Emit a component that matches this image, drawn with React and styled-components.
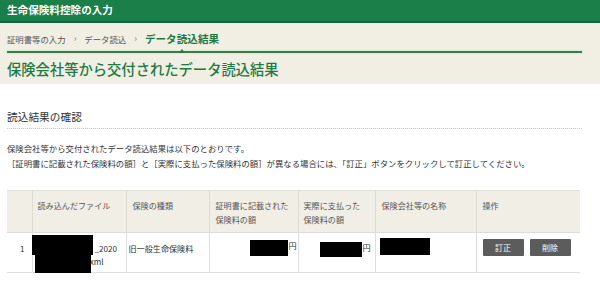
import React from "react";
import styled, { createGlobalStyle } from "styled-components";

const GlobalStyle = createGlobalStyle`
  html, body { margin: 0; padding: 0; background: #ffffff; }
  body {
    font-family: "Noto Sans CJK JP", "Noto Sans", "Liberation Sans", sans-serif;
    color: #333333;
    width: 600px;
    overflow: hidden;
  }
  * { box-sizing: border-box; }
`;

const Page = styled.div`
  width: 600px;
  display: flex;
  flex-direction: column;
`;

const TopBar = styled.header`
  height: 23px;
  background: #1b7f4a;
  border-bottom: 2px solid #15633a;
  display: flex;
  align-items: center;
  padding: 0 0 2px 7px;
  color: #ffffff;
  font-weight: 700;
  font-size: 10.6px;
  line-height: 12px;
`;

const Hero = styled.section`
  background: #f1eee4;
  border-top: 1px solid #e4efe4;
  padding: 0 18px 0 7px;
  display: flex;
  flex-direction: column;
`;

const Breadcrumb = styled.nav`
  height: 27px;
  padding-top: 2px;
  display: flex;
  align-items: center;
  gap: 7px;
  font-size: 8.4px;
  line-height: 12px;
  color: #555555;
`;

const Crumb = styled.span`
  position: relative;
  font-size: ${(p) => (p.$current ? "10.6px" : "8.4px")};
  font-weight: ${(p) => (p.$current ? 700 : 400)};
  color: ${(p) => (p.$current ? "#1f7a45" : "#555555")};
  ${(p) =>
    p.$current &&
    `
    &::after {
      content: "";
      position: absolute;
      left: 50%;
      bottom: -8px;
      margin-left: -3px;
      border-left: 3px solid transparent;
      border-right: 3px solid transparent;
      border-bottom: 4px solid #2f7445;
    }
  `}
`;

const Sep = styled.span`
  font-size: 9px;
  color: #777777;
  padding: 0 1px;
`;

const Rule = styled.div`
  height: 2px;
  background: #3d7a4e;
  box-shadow: 0 0 0 1px #d9ead6;
`;

const Title = styled.h1`
  margin: 0;
  height: 31px;
  display: flex;
  align-items: center;
  font-size: 14.3px;
  font-weight: 500;
  color: #1f7a45;
  line-height: 18px;
`;

const Content = styled.main`
  padding: 26px 18px 0 7px;
  display: flex;
  flex-direction: column;
`;

const SectionHeading = styled.h2`
  margin: 0;
  font-size: 10.7px;
  font-weight: 400;
  line-height: 14px;
  color: #333333;
  padding-bottom: 4px;
  border-bottom: 1px dotted #d6c894;
`;

const Lead = styled.div`
  margin-top: 12px;
  font-size: 8.4px;
  line-height: 15px;
  color: #333333;
`;

const Line = styled.p`
  margin: 0;
  white-space: nowrap;
`;

const Table = styled.table`
  margin-top: 19px;
  width: 573px;
  border-collapse: collapse;
  table-layout: fixed;
  font-size: 8.1px;
`;

const Col = styled.col`
  width: ${(p) => p.$w}px;
`;

const Th = styled.th`
  background: #f1eee5;
  border-top: 1px solid #e2e0d8;
  border-left: ${(p) => (p.$first ? "none" : "1px solid #dedbd2")};
  border-bottom: 1px solid #dcdcdc;
  height: 41px;
  padding: 8px 6px 5px ${(p) => (p.$pl ?? 6)}px;
  text-align: left;
  vertical-align: top;
  font-weight: 400;
  color: #555555;
  line-height: 14px;
`;

const Td = styled.td`
  border-left: ${(p) => (p.$first ? "none" : "1px solid #dedede")};
  border-bottom: 1px solid #dedede;
  height: 40px;
  padding: ${(p) => p.$pt ?? 9}px ${(p) => p.$pr ?? 4}px 0 ${(p) => p.$pl ?? 4}px;
  vertical-align: top;
  text-align: ${(p) => p.$align || "left"};
  line-height: 13px;
  color: #333333;
`;

const FileName = styled.div`
  position: relative;
  display: flex;
  flex-direction: column;
`;

const Hidden = styled.span`
  display: inline-block;
  width: ${(p) => p.$w}px;
`;

const Redaction = styled.span`
  position: absolute;
  left: ${(p) => p.$x}px;
  top: ${(p) => p.$y}px;
  width: ${(p) => p.$w}px;
  height: ${(p) => p.$h}px;
  background: #000000;
`;

const Amount = styled.div`
  display: flex;
  justify-content: flex-end;
  align-items: flex-start;
  margin-top: ${(p) => p.$mt}px;
`;

const Block = styled.span`
  display: block;
  width: ${(p) => p.$w}px;
  height: ${(p) => p.$h}px;
  background: #000000;
`;

const Yen = styled.span`
  line-height: 12px;
  font-size: 8.1px;
  color: #333333;
`;

const Actions = styled.div`
  display: flex;
  gap: 6px;
`;

const Button = styled.button`
  width: 41px;
  height: 17px;
  border: none;
  border-radius: 1px;
  background: #5c5c5c;
  color: #ffffff;
  font-family: inherit;
  font-size: 8px;
  line-height: 17px;
  padding: 0;
  cursor: pointer;
`;

const columns = [25, 94, 83, 89, 77, 101, 104];

export default function App() {
  return (
    <Page>
      <GlobalStyle />
      <TopBar>生命保険料控除の入力</TopBar>
      <Hero>
        <Breadcrumb>
          <Crumb>証明書等の入力</Crumb>
          <Sep>›</Sep>
          <Crumb>データ読込</Crumb>
          <Sep>›</Sep>
          <Crumb $current>データ読込結果</Crumb>
        </Breadcrumb>
        <Rule />
        <Title>保険会社等から交付されたデータ読込結果</Title>
      </Hero>
      <Content>
        <SectionHeading>読込結果の確認</SectionHeading>
        <Lead>
          <Line>保険会社等から交付されたデータ読込結果は以下のとおりです。</Line>
          <Line>
            ［証明書に記載された保険料の額］と［実際に支払った保険料の額］が異なる場合には、「訂正」ボタンをクリックして訂正してください。
          </Line>
        </Lead>
        <Table>
          <colgroup>
            {columns.map((w, i) => (
              <Col key={i} $w={w} />
            ))}
          </colgroup>
          <thead>
            <tr>
              <Th $first />
              <Th $pl={5}>読み込んだファイル</Th>
              <Th>保険の種類</Th>
              <Th>
                証明書に記載された
                <br />
                保険料の額
              </Th>
              <Th $pl={5}>
                実際に支払った
                <br />
                保険料の額
              </Th>
              <Th>保険会社等の名称</Th>
              <Th>操作</Th>
            </tr>
          </thead>
          <tbody>
            <tr>
              <Td $first $align="right" $pr={7}>
                1
              </Td>
              <Td>
                <FileName>
                  <span>
                    <Hidden $w={58} />_2020
                  </span>
                  <span>
                    <Hidden $w={51} />.xml
                  </span>
                  <Redaction $x={-5} $y={-7} $w={61} $h={20} />
                  <Redaction $x={-2} $y={10} $w={56} $h={21} />
                </FileName>
              </Td>
              <Td $pl={2}>旧一般生命保険料</Td>
              <Td $pt={0} $pr={1}>
                <Amount $mt={7}>
                  <Block $w={38} $h={16} />
                  <Yen>円</Yen>
                </Amount>
              </Td>
              <Td $pt={0} $pr={4}>
                <Amount $mt={9}>
                  <Block $w={42} $h={15} />
                  <Yen>円</Yen>
                </Amount>
              </Td>
              <Td $pt={5} $pl={4}>
                <Block $w={50} $h={17} />
              </Td>
              <Td $pt={6} $pl={6}>
                <Actions>
                  <Button>訂正</Button>
                  <Button>削除</Button>
                </Actions>
              </Td>
            </tr>
          </tbody>
        </Table>
      </Content>
    </Page>
  );
}
